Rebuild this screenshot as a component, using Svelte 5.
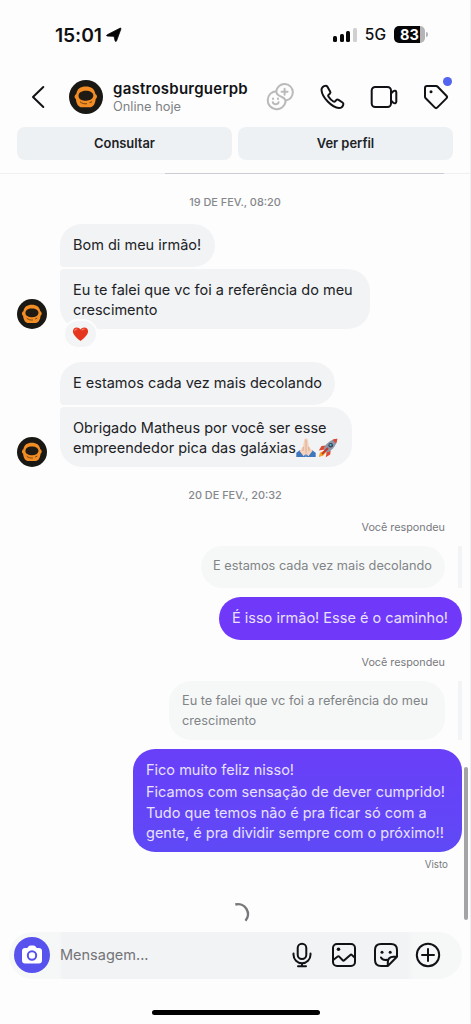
<script lang="ts">
  const username = 'gastrosburguerpb';
  const signal = [6, 8, 11, 14];
  const actions = ['Consultar', 'Ver perfil'];
  let draft = '';
</script>

{#snippet burger(size: number)}
  <svg class="avatar" width={size} height={size} viewBox="0 0 34 34">
    <circle cx="17" cy="17" r="17" fill="#191815" />
    <path d="M7.300 14C8 9 11.500 6.600 16.800 6.600S25.600 9 26.400 14c1.900.8 2.300 3.900.3 5-.5 5.300-2.700 8.300-6.200 8.300h-7.400c-3.500 0-5.700-3-6.200-8.300-2-1.100-1.500-4.200.4-5z" fill="#f28c24" />
    <path d="M9.600 16.500c-.4-3.500 2.700-5.700 7.200-5.700s7.900 2 7.500 5.300c-.5 2.900-3.500 4.600-7.200 4.700-3.600 0-7.100-1.400-7.500-4.300z" fill="#201a14" />
    <path d="M11 21.700c2 1.900 4.500 2.400 7 2M20.500 22.700l2.500-1" fill="none" stroke="#4a2d12" stroke-width=".8" />
  </svg>
{/snippet}

<div class="screen">
  <div class="status-bar">
    <div class="clock">
      <span>15:01</span>
      <svg width="16" height="16" viewBox="0 0 16 16"><path d="M1.200 7.800 14 1.200c.7-.3 1.100.1.900.8L10.500 14c-.3.700-1.200.6-1.400-.2L8 9.300l-6.500-.2c-1 0-1.200-.9-.3-1.300z" fill="#050507" stroke="#050507" stroke-width=".8" /></svg>
    </div>
    <div class="phone-state">
      <div class="signal">
        {#each signal as height, i}
          <i style="height: {height}px" class:off={i === 3}></i>
        {/each}
      </div>
      <span class="network">5G</span>
      <div class="battery"><span>83</span></div>
      <i class="battery-tip"></i>
    </div>
  </div>

  <header>
    <div class="profile-row">
      <svg class="back" width="14" height="24" viewBox="0 0 14 24"><path d="M12.300 2 2 12l10.300 10" /></svg>
      {@render burger(34)}
      <div class="identity">
        <strong>{username}</strong>
        <span>Online hoje</span>
      </div>
      <div class="header-icons">
        <svg class="muted" width="28" height="28" viewBox="0 0 28 28">
          <path d="M10.300 8.200A8.300 8.300 0 1 1 19.800 17.500" />
          <path d="M10.300 8.200A9 9 0 1 0 19.600 18.500C19.500 15.300 17.300 14.500 14.200 13.200c-2.400-1-3.900-2.500-3.900-5z" />
          <path d="M18.600 5.800v6M15.600 8.800h6M6.800 19.300c.8 2.700 5 2.700 5.800 0" />
          <path d="M7 15.500v.5M12 15.500v.5" />
        </svg>
        <svg width="26" height="26" viewBox="0 0 26 26"><path d="M6.500 1.700c-1.900.1-4.100 1.900-4 4.300.3 4.200 3 8.200 6.200 11.500 3.400 3.500 7.200 6.400 11.200 6.600 2.100 0 3.900-1.700 4.400-3.600.2-.8-.1-1.500-.8-2l-4-2.700c-.8-.5-1.700-.4-2.300.3l-1 1.200c-.5.5-1.200.6-1.800.2-2-1.300-3.700-3-5-5-.4-.6-.3-1.300.2-1.800l1.200-1c.7-.6.8-1.500.3-2.300L8.300 2.600c-.4-.6-1-1-1.800-.9z" /></svg>
        <svg width="28" height="24" viewBox="0 0 28 24"><rect x="1.700" y="2" width="19.300" height="20" rx="3.500" /><path d="m21 8.500 2.300-2.200c1.200-1 3-.6 3 1v9.400c0 1.600-1.800 2-3 1L21 15.500" /></svg>
        <div class="tag">
          <svg width="26" height="26" viewBox="0 0 26 26"><path d="M2 4v8.700c0 .6.200 1.100.7 1.600l9 9.100c.8.800 1.900.8 2.700 0l9-9c.8-.8.800-1.900 0-2.700l-8.700-9c-.5-.5-1-.7-1.600-.7H4c-1.200 0-2 .8-2 2z" /><circle class="fill" cx="8" cy="7.800" r="1.500" /></svg>
          <i class="badge"></i>
        </div>
      </div>
    </div>
    <div class="actions">
      {#each actions as action}
        <button>{action}</button>
      {/each}
    </div>
  </header>

  <main>
    <time>19 DE FEV., 08:20</time>

    <div class="received first">
      {@render burger(30)}
      <div class="stack">
        <div class="bubble top b1">Bom di meu irmão!</div>
        <div class="bubble bottom b2">Eu te falei que vc foi a referência do meu<br />crescimento
          <span class="reaction">
            <svg width="17" height="16" viewBox="0 0 18 16"><path d="M9 15.500C5.500 12.800 1 9.200 1 5.200 1 2.700 2.700 1 5 1c1.700 0 3.200.9 4 2.300C9.800 1.900 11.300 1 13 1c2.300 0 4 1.700 4 4.200 0 4-4.500 7.600-8 10.300z" fill="#e5351f" /><path d="M3 4.500c.2-1.200 1-1.800 2.200-1.800M10.800 3.700c.5-.7 1.200-1 2.100-1" stroke="#fa8669" stroke-width="1.200" stroke-linecap="round" fill="none" /></svg>
          </span>
        </div>
      </div>
    </div>

    <div class="received second">
      {@render burger(30)}
      <div class="stack">
        <div class="bubble top b3">E estamos cada vez mais decolando</div>
        <div class="bubble bottom b4">Obrigado Matheus por você ser esse<br />empreendedor pica das galáxias<svg class="emoji" width="20" height="20" viewBox="0 0 20 20"><path d="M.3 14.700 4.200 12l5.600 4.500V19H.3zM19.700 14.700 15.800 12l-5.600 4.500V19h9.500z" fill="#3f76bd" /><path d="M9.900.5c-.9-.2-1.500.4-1.700 1.400L7 8.500 3.600 13l4 5.200 2.300-2.400zM10.100.5c.9-.2 1.500.4 1.700 1.400L13 8.500l3.400 4.500-4 5.200-2.300-2.400z" fill="#f5d2bb" /><path d="M10 1.500v14M7.300 9l-.3 4M12.700 9l.3 4" stroke="#cf9c82" stroke-width=".7" fill="none" /></svg><svg class="emoji" width="20" height="20" viewBox="0 0 20 20"><path d="M6.500 12.500 2 14.500.8 19l4.300-1.300 3-3.500z" fill="#f6a12c" /><path d="M7.500 7.500 3.500 8 .8 12.500l5-.8zM12.700 12.500l-.5 4-4.400 2.800.8-5z" fill="#df4932" /><path d="M5.500 12c1-5 5.500-10.300 13.800-11.300C18.500 8.500 13 13.500 8 14.700z" fill="#8b97a6" /><path d="M14.500 1.800c1.500-.7 3-1 4.800-1.100-.1 1.700-.5 3.300-1.200 4.800z" fill="#dc4733" /><circle cx="12.700" cy="7.200" r="2.300" fill="#354457" /><circle cx="12.500" cy="7" r="1.100" fill="#65b4dd" /><path d="m4.500 15.500 5-5" stroke="#c93528" stroke-width="1.800" stroke-linecap="round" /></svg></div>
      </div>
    </div>

    <time class="second-date">20 DE FEV., 20:32</time>

    <div class="reply-label">Você respondeu</div>
    <div class="quote-row"><div class="quote q1">E estamos cada vez mais decolando</div><i></i></div>
    <div class="sent s1">É isso irmão! Esse é o caminho!</div>

    <div class="reply-label again">Você respondeu</div>
    <div class="quote-row"><div class="quote q2">Eu te falei que vc foi a referência do meu<br />crescimento</div><i></i></div>
    <div class="sent s2">
      <p>Fico muito feliz nisso!</p>
      <p>Ficamos com sensação de dever cumprido!</p>
      <p>Tudo que temos não é pra ficar só com a<br />gente, é pra dividir sempre com o próximo!!</p>
    </div>
    <div class="seen">Visto</div>
    <svg class="spinner" width="24" height="24" viewBox="0 0 24 24"><path d="M9.300 3.500a10 10 0 0 1 10.200 16.200" /></svg>
  </main>

  <footer>
    <div class="camera">
      <svg width="22" height="20" viewBox="0 0 22 20"><path d="M4 3h2.200l1.500-1.700C8.200.7 8.700.5 9.400.5h3.200c.7 0 1.200.2 1.700.8L15.800 3H18c1.800 0 3 1.200 3 3v9.500c0 1.800-1.200 3-3 3H4c-1.800 0-3-1.200-3-3V6c0-1.800 1.200-3 3-3z" fill="#fff" /><circle cx="11" cy="10.500" r="4.200" fill="none" stroke="#5751ee" stroke-width="2" /></svg>
    </div>
    <input placeholder="Mensagem..." bind:value={draft} />
    <div class="tools">
      <svg width="26" height="26" viewBox="0 0 26 26"><rect x="8.700" y="1.700" width="8.600" height="15.300" rx="4.300" /><path d="M4.500 11.500v1.200a8.500 8.500 0 0 0 17 0v-1.200M13 21.200v3M9 24.200h8" /></svg>
      <svg width="26" height="26" viewBox="0 0 26 26"><rect x="2" y="2" width="22" height="22" rx="4" /><circle class="fill" cx="7.500" cy="7.200" r="1.800" /><path d="m2.200 18 4.500-3.500c.5-.4 1-.3 1.500.1l3.500 3.600c.5.500 1.100.5 1.600 0l6-5.300c.5-.5 1.100-.5 1.600 0l3 2.800" /></svg>
      <svg width="26" height="26" viewBox="0 0 26 26"><path d="M14.800 24H8c-4 0-6-2-6-6V8c0-4 2-6 6-6h10c4 0 6 2 6 6v6.800L14.800 24zM14.800 24v-3.500c0-4 2-5.700 5.700-5.700H24M8 15.500c1.100 2 3.300 2.700 5.800 2.300" /><circle class="fill" cx="9" cy="10.200" r="1.500" /><circle class="fill" cx="17.200" cy="10.200" r="1.500" /></svg>
      <svg width="26" height="26" viewBox="0 0 26 26"><circle cx="13" cy="13" r="11.200" /><path d="M13 7v12M7 13h12" /></svg>
    </div>
  </footer>
  <div class="home-indicator"></div>
  <div class="scrollbar"></div>
</div>

<style>
  :global(body) {
    background: #fdfdfd;
  }
  .screen {
    position: relative;
    box-sizing: border-box;
    width: 471px;
    height: 1024px;
    display: flex;
    flex-direction: column;
    overflow: hidden;
    border-right: 1px solid #efeff1;
    background: #fdfdfd;
    color: #202225;
    font-family: Inter, "Liberation Sans", sans-serif;
  }
  svg {
    display: block;
    flex-shrink: 0;
  }

  /* Status bar */
  .status-bar {
    height: 70px;
    flex-shrink: 0;
    display: flex;
    align-items: center;
    justify-content: space-between;
    padding: 0 42px 0 55px;
    color: #101013;
  }
  .clock {
    display: flex;
    align-items: center;
    gap: 4px;
    font-size: 19.300px;
    font-weight: 600;
    letter-spacing: -0.1px;
  }
  .phone-state {
    display: flex;
    align-items: center;
    margin-top: -1px;
  }
  .signal {
    display: flex;
    align-items: flex-end;
    gap: 2.500px;
    height: 15px;
  }
  .signal i {
    width: 4px;
    border-radius: 1.500px;
    background: #08080a;
  }
  .signal i.off {
    background: #d0d0d2;
  }
  .network {
    margin: 0 8px 0 8px;
    font-size: 15.500px;
    font-weight: 500;
  }
  .battery {
    width: 31px;
    height: 17px;
    border-radius: 5px;
    background: linear-gradient(90deg, #060608 83%, #b5b5b7 83%);
    color: #fff;
    font-size: 14.500px;
    font-weight: 700;
    line-height: 17px;
    text-align: center;
  }
  .battery-tip {
    width: 2px;
    height: 5px;
    margin-left: 1px;
    border-radius: 0 2px 2px 0;
    background: #b5b5b7;
  }

  /* Header */
  header {
    position: relative;
    flex-shrink: 0;
    box-sizing: border-box;
    height: 104px;
    padding: 10px 17px 0;
    border-bottom: 1px solid #f0eff2;
  }
  header::after {
    content: "";
    position: absolute;
    left: 165px;
    bottom: -1px;
    width: 279px;
    height: 1px;
    background: #cfcbd5;
  }
  .profile-row {
    display: flex;
    align-items: center;
    height: 34px;
    padding-left: 14px;
  }
  .back {
    margin-right: 24px;
  }
  .profile-row .avatar {
    margin-top: -1px;
  }
  .back path,
  .header-icons svg,
  .tools svg {
    fill: none;
    stroke: #101215;
    stroke-width: 2;
    stroke-linecap: round;
    stroke-linejoin: round;
  }
  .header-icons .fill,
  .tools .fill {
    fill: #101215;
    stroke: none;
  }
  .header-icons svg.muted {
    stroke: #b9babc;
  }
  .identity {
    width: 142px;
    margin-left: 10px;
    padding-top: 2px;
    display: flex;
    flex-direction: column;
    line-height: 18px;
    white-space: nowrap;
  }
  .identity strong {
    font-size: 15px;
    letter-spacing: 0.25px;
    font-weight: 600;
    color: #111316;
  }
  .identity span {
    font-size: 12.800px;
    color: #7e8185;
  }
  .header-icons {
    display: flex;
    align-items: center;
    justify-content: space-between;
    width: 183px;
    margin-left: 11px;
    flex-shrink: 0;
  }
  .tag {
    position: relative;
  }
  .badge {
    position: absolute;
    top: -7px;
    right: -3px;
    width: 9px;
    height: 9px;
    border-radius: 50%;
    background: #5364ee;
  }
  .actions {
    display: grid;
    grid-template-columns: 215px 215px;
    gap: 6px;
    margin-top: 13px;
  }
  .actions button {
    height: 33px;
    padding: 0;
    border: 0;
    border-radius: 8px;
    background: #eef1f4;
    color: #202326;
    font: 600 12.900px Inter, sans-serif;
  }

  /* Conversation */
  main {
    display: flex;
    flex-direction: column;
    height: 758px;
    flex-shrink: 0;
  }
  time {
    margin-top: 20px;
    height: 16px;
    font-size: 10.900px;
    line-height: 16px;
    text-align: center;
    color: #85878b;
    font-weight: 500;
  }
  .second-date {
    margin-top: 20px;
  }
  .received {
    display: flex;
    align-items: flex-end;
    gap: 13px;
    padding-left: 17px;
  }
  .received.first {
    margin-top: 14px;
  }
  .received.second {
    margin-top: 33px;
  }
  .stack {
    display: flex;
    flex-direction: column;
    align-items: flex-start;
    gap: 2px;
  }
  .bubble,
  .quote,
  .sent {
    box-sizing: border-box;
    padding: 11px 13px;
    border-radius: 22px;
    font-size: 14.500px;
    line-height: 19.500px;
    white-space: nowrap;
  }
  .bubble {
    position: relative;
    height: 43px;
    background: #f2f3f5;
  }
  .bubble.top {
    border-bottom-left-radius: 4px;
  }
  .bubble.bottom {
    height: 60px;
    border-top-left-radius: 4px;
  }
  .b1 {
    width: 155px;
  }
  .b2 {
    width: 310px;
  }
  .b3 {
    width: 275px;
  }
  .b4 {
    width: 292px;
  }
  .reaction {
    position: absolute;
    left: 5px;
    top: 52px;
    width: 31px;
    height: 26px;
    border: 2px solid #fdfdfd;
    margin: -2px;
    border-radius: 15px;
    background: #f3f4f6;
    display: flex;
    align-items: center;
    justify-content: center;
  }
  .emoji {
    display: inline-block;
    vertical-align: -5px;
    margin-right: 2px;
  }
  .reply-label {
    margin: 17px 25px 0 0;
    height: 16px;
    font-size: 10.800px;
    line-height: 16px;
    text-align: right;
    color: #77797d;
  }
  .reply-label.again {
    margin-top: 15px;
  }
  .quote-row {
    display: flex;
    justify-content: flex-end;
    gap: 13px;
    margin: 10px 8px 0 0;
  }
  .quote-row i {
    width: 4px;
    background: #f3f4f5;
  }
  .quote {
    padding: 10px 12px;
    background: #f6f8f8;
    color: #818486;
    font-size: 12.750px;
  }
  .q1 {
    width: 244px;
    height: 42px;
  }
  .q2 {
    width: 276px;
    height: 59px;
    padding-left: 13px;
  }
  .sent {
    align-self: flex-end;
    margin: 9px 8px 0 0;
    color: #e8e1ff;
  }
  .s1 {
    width: 243px;
    height: 43px;
    background: #7038f8;
  }
  .s2 {
    width: 329px;
    height: 103px;
    background: linear-gradient(#693ff8, #5f49f6);
  }
  .s2 p {
    margin: 0 0 2px;
  }
  .seen {
    margin: 5px 22px 0 0;
    height: 16px;
    font-size: 9.800px;
    line-height: 16px;
    text-align: right;
    color: #77797d;
  }
  .spinner {
    margin: 28px 0 0 226px;
  }
  .spinner path {
    fill: none;
    stroke: #76787b;
    stroke-width: 2.500;
  }

  /* Composer */
  footer {
    box-sizing: border-box;
    display: flex;
    align-items: center;
    height: 47px;
    flex-shrink: 0;
    margin: 0 8px 0 9px;
    padding: 0 21px 2px 5px;
    border-radius: 24px;
    background: linear-gradient(90deg, #f6f7f7 50px, #f2f3f5 54px, #f2f3f5 398px, #f6f7f7 404px);
  }
  .camera {
    width: 36px;
    height: 36px;
    flex-shrink: 0;
    border-radius: 50%;
    background: #5751ee;
    display: flex;
    align-items: center;
    justify-content: center;
  }
  input {
    flex: 1;
    min-width: 0;
    padding: 0;
    margin-left: 10px;
    border: 0;
    outline: 0;
    background: none;
    font: 14.500px Inter, sans-serif;
  }
  input::placeholder {
    color: #727478;
    opacity: 1;
  }
  .tools {
    display: flex;
    justify-content: space-between;
    width: 152px;
  }
  .home-indicator {
    width: 168px;
    height: 5px;
    flex-shrink: 0;
    margin: 31px 0 0 152px;
    border-radius: 3px;
    background: #000;
  }
  .scrollbar {
    position: absolute;
    right: 2px;
    top: 767px;
    width: 4px;
    height: 153px;
    border-radius: 2px;
    background: #a4a4a7;
  }
</style>
